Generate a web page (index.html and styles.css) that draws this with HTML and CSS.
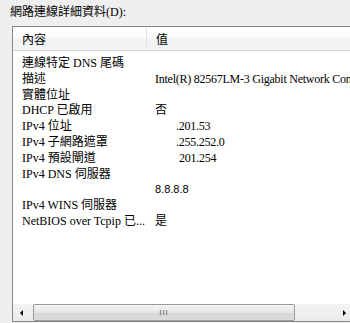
FILE: index.html
```html
<!DOCTYPE html>
<html>
<head>
<meta charset="utf-8">
<link rel="stylesheet" href="styles.css">
</head>
<body>
<div class="label">網路連線詳細資料(D):</div>
<div class="listbox">
  <div class="header">
    <div class="hcol first">內容</div>
    <div class="hsep"></div>
    <div class="hcol">值</div>
  </div>
  <div class="rows">
    <div class="row"><span class="k">連線特定 DNS 尾碼</span><span class="v"></span></div>
    <div class="row"><span class="k">描述</span><span class="v">Intel(R) 82567LM-3 Gigabit Network Connection</span></div>
    <div class="row"><span class="k">實體位址</span><span class="v"></span></div>
    <div class="row"><span class="k">DHCP 已啟用</span><span class="v">否</span></div>
    <div class="row"><span class="k">IPv4 位址</span><span class="v ip1">.201.53</span></div>
    <div class="row"><span class="k">IPv4 子網路遮罩</span><span class="v ip2">.255.252.0</span></div>
    <div class="row"><span class="k">IPv4 預設閘道</span><span class="v ip3">201.254</span></div>
    <div class="row"><span class="k">IPv4 DNS 伺服器</span><span class="v"></span></div>
    <div class="row"><span class="k"></span><span class="v sans">8.8.8.8</span></div>
    <div class="row"><span class="k">IPv4 WINS 伺服器</span><span class="v"></span></div>
    <div class="row"><span class="k">NetBIOS over Tcpip 已...</span><span class="v">是</span></div>
  </div>
  <div class="hscroll">
    <div class="sbtn"><span class="tri-left"></span></div>
    <div class="track">
      <div class="thumb"><span class="grip">III</span></div>
    </div>
    <div class="sbtn"><span class="tri-right"></span></div>
  </div>
</div>
</body>
</html>
```
FILE: styles.css
```css
html, body {
  margin: 0;
  padding: 0;
}
body {
  width: 350px;
  height: 323px;
  overflow: hidden;
  background: #efefef;
  font-family: "Liberation Serif", "Noto Sans CJK TC", serif;
  font-size: 12px;
  color: #000;
}
.label {
  height: 26px;
  box-sizing: border-box;
  padding: 5px 0 0 10px;
  line-height: 14px;
}
.listbox {
  margin-left: 12px;
  width: 342px;
  height: 296px;
  box-sizing: border-box;
  border: 1px solid #828790;
  background: #fff;
  display: flex;
  flex-direction: column;
  overflow: hidden;
}
.header {
  height: 24px;
  box-sizing: border-box;
  border-bottom: 1px solid #d5d5d5;
  background: linear-gradient(#ffffff 0%, #fbfbfc 45%, #f2f3f5 55%, #f1f2f4 100%);
  display: flex;
  align-items: stretch;
  flex: none;
}
.hcol {
  display: flex;
  align-items: center;
  padding-left: 9px;
  padding-top: 1px;
}
.hcol.first {
  width: 124px;
}
.hsep {
  width: 1px;
  background: #e3e4e6;
}
.rows {
  flex: 1;
  padding-top: 4px;
}
.row {
  display: flex;
  height: 15.8px;
  line-height: 16px;
  white-space: nowrap;
}
.k {
  width: 134px;
  box-sizing: border-box;
  padding-left: 9px;
  flex: none;
}
.v {
  padding-left: 8px;
  letter-spacing: -0.25px;
}
.ip1, .ip2 {
  padding-left: 29px;
}
.ip3 {
  padding-left: 32px;
}
.sans {
  font-family: "Liberation Sans", sans-serif;
  font-size: 11px;
  letter-spacing: 0;
}
.hscroll {
  height: 17px;
  flex: none;
  display: flex;
  background: linear-gradient(#f3f3f3, #ececec);
}
.sbtn {
  width: 17px;
  display: flex;
  align-items: center;
  justify-content: center;
  flex: none;
}
.tri-left {
  width: 0;
  height: 0;
  border-top: 3px solid transparent;
  border-bottom: 3px solid transparent;
  border-right: 3px solid #000;
}
.tri-right {
  width: 0;
  height: 0;
  border-top: 3px solid transparent;
  border-bottom: 3px solid transparent;
  border-left: 3px solid #000;
}
.track {
  flex: 1;
  display: flex;
  align-items: stretch;
  padding: 0 0 0 3px;
}
.thumb {
  width: 262px;
  box-sizing: border-box;
  border: 1px solid #9a9a9a;
  border-radius: 2px;
  background: linear-gradient(#f4f4f4, #e6e6e6 50%, #d6d6d6 51%, #dcdcdc);
  display: flex;
  align-items: center;
  justify-content: center;
}
.grip {
  font-family: "Liberation Sans", sans-serif;
  font-size: 8px;
  letter-spacing: 1px;
  color: #555;
  line-height: 8px;
}
```
